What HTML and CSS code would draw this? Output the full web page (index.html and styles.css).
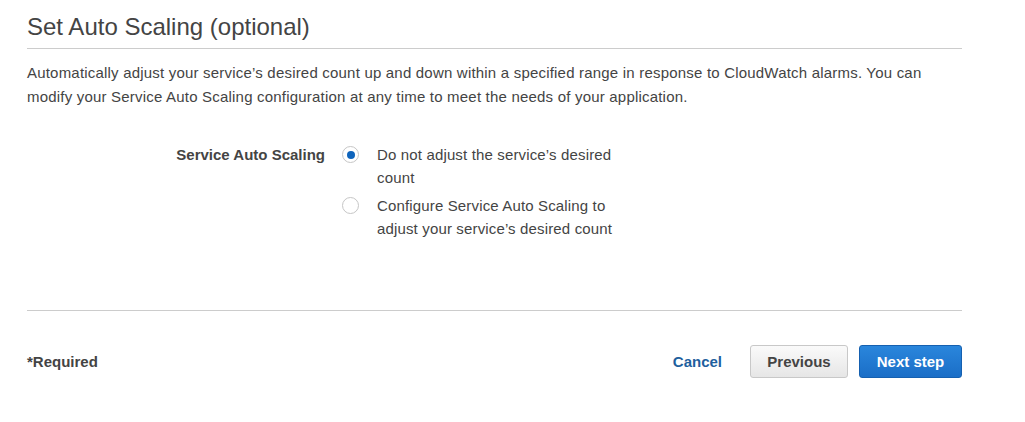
FILE: index.html
```html
<!DOCTYPE html>
<html>
<head>
<meta charset="utf-8">
<link rel="stylesheet" href="styles.css">
</head>
<body>
<div class="page">
  <h1 class="title">Set Auto Scaling (optional)</h1>
  <p class="intro">Automatically adjust your service’s desired count up and down within a specified range in response to CloudWatch alarms. You can modify your Service Auto Scaling configuration at any time to meet the needs of your application.</p>
  <div class="form-row">
    <div class="label">Service Auto Scaling</div>
    <div class="options">
      <label class="option">
        <span class="radio checked"></span>
        <span class="option-text">Do not adjust the service’s desired count</span>
      </label>
      <label class="option">
        <span class="radio"></span>
        <span class="option-text">Configure Service Auto Scaling to adjust your service’s desired count</span>
      </label>
    </div>
  </div>
  <div class="footer">
    <div class="required">*Required</div>
    <div class="actions">
      <a class="cancel">Cancel</a>
      <button class="btn btn-secondary">Previous</button>
      <button class="btn btn-primary">Next step</button>
    </div>
  </div>
</div>
</body>
</html>
```

FILE: styles.css
```css
html, body {
  margin: 0;
  padding: 0;
  background: #fff;
}
body {
  font-family: "Liberation Sans", Arial, sans-serif;
  color: #444;
}
.page {
  width: 935px;
  margin-left: 27px;
  padding-top: 12px;
}
.title {
  margin: 0;
  font-size: 24px;
  font-weight: normal;
  color: #444;
  line-height: 30px;
  padding-bottom: 6px;
  border-bottom: 1px solid #ccc;
}
.intro {
  margin: 12px 0 0 0;
  font-size: 15px;
  line-height: 24px;
  letter-spacing: 0.2px;
  color: #444;
}
.form-row {
  display: flex;
  margin-top: 34px;
  height: 167px;
  border-bottom: 1px solid #ccc;
}
.label {
  width: 298px;
  text-align: right;
  font-weight: bold;
  font-size: 15px;
  line-height: 23px;
  color: #444;
}
.options {
  display: flex;
  flex-direction: column;
  gap: 5px;
  margin-left: 17px;
}
.option {
  display: flex;
  align-items: flex-start;
}
.radio {
  width: 15px;
  height: 15px;
  border: 1px solid #c6c6c6;
  border-radius: 50%;
  background: #fff;
  margin-top: 3px;
  flex: none;
  box-sizing: content-box;
  position: relative;
}
.radio.checked::after {
  content: "";
  position: absolute;
  left: 3.5px;
  top: 3.5px;
  width: 8px;
  height: 8px;
  border-radius: 50%;
  background: #0f64bc;
}
.option-text {
  width: 250px;
  margin-left: 18px;
  font-size: 15px;
  line-height: 23px;
  letter-spacing: 0.15px;
  color: #444;
}
.footer {
  display: flex;
  justify-content: space-between;
  align-items: center;
  margin-top: 34px;
}
.required {
  font-weight: bold;
  font-size: 15px;
  color: #444;
}
.actions {
  display: flex;
  align-items: center;
}
.cancel {
  font-weight: bold;
  font-size: 15px;
  color: #1e5f9e;
  margin-right: 28px;
}
.btn {
  font-family: "Liberation Sans", Arial, sans-serif;
  font-weight: bold;
  font-size: 15px;
  height: 33px;
  border-radius: 3px;
  padding: 0 10px;
  cursor: pointer;
}
.btn-secondary {
  width: 98px;
  color: #444;
  background: linear-gradient(#fafafa, #e6e6e6);
  border: 1px solid #c8c8c8;
  margin-right: 11px;
}
.btn-primary {
  width: 103px;
  color: #fff;
  background: linear-gradient(#2a86dc, #1a6ec7);
  border: 1px solid #1560b0;
}
```
